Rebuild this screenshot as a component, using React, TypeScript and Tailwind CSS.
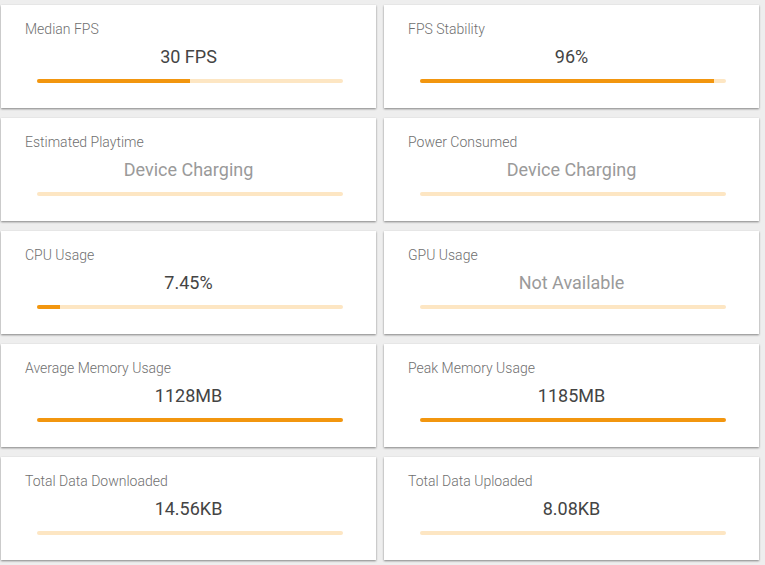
import React from "react";

type Stat = {
  label: string;
  value: string;
  pct: number;
  muted?: boolean;
};

const stats: Stat[] = [
  { label: "Median FPS", value: "30 FPS", pct: 50 },
  { label: "FPS Stability", value: "96%", pct: 96 },
  { label: "Estimated Playtime", value: "Device Charging", pct: 0, muted: true },
  { label: "Power Consumed", value: "Device Charging", pct: 0, muted: true },
  { label: "CPU Usage", value: "7.45%", pct: 7.45 },
  { label: "GPU Usage", value: "Not Available", pct: 0, muted: true },
  { label: "Average Memory Usage", value: "1128MB", pct: 100 },
  { label: "Peak Memory Usage", value: "1185MB", pct: 100 },
  { label: "Total Data Downloaded", value: "14.56KB", pct: 0 },
  { label: "Total Data Uploaded", value: "8.08KB", pct: 0 },
];

function StatCard({ stat }: { stat: Stat }) {
  return (
    <div className="h-[103px] bg-white px-6 pt-4 shadow-[0_1px_2px_rgba(0,0,0,0.45)]">
      <p className="text-[14px] font-light leading-4 text-[#6f6f6f]">{stat.label}</p>
      <p
        className={`mt-[10px] text-center text-[18px] leading-5 ${
          stat.muted ? "text-[#9a9a9a]" : "text-[#444444]"
        }`}
      >
        {stat.value}
      </p>
      <div className="ml-3 mr-[9px] mt-3 h-1 overflow-hidden rounded-full bg-[#fde6c3]">
        <div
          className="h-full bg-[#f2960f]"
          style={{ width: `${stat.pct}%` }}
        />
      </div>
    </div>
  );
}

export default function App() {
  return (
    <div className="min-h-[565px] w-[765px] bg-[#eeeeee] pt-[5px] font-['Roboto',sans-serif]">
      <div className="ml-[1px] grid w-[758px] grid-cols-2 gap-x-2 gap-y-[10px]">
        {stats.map((stat) => (
          <StatCard key={stat.label} stat={stat} />
        ))}
      </div>
    </div>
  );
}
